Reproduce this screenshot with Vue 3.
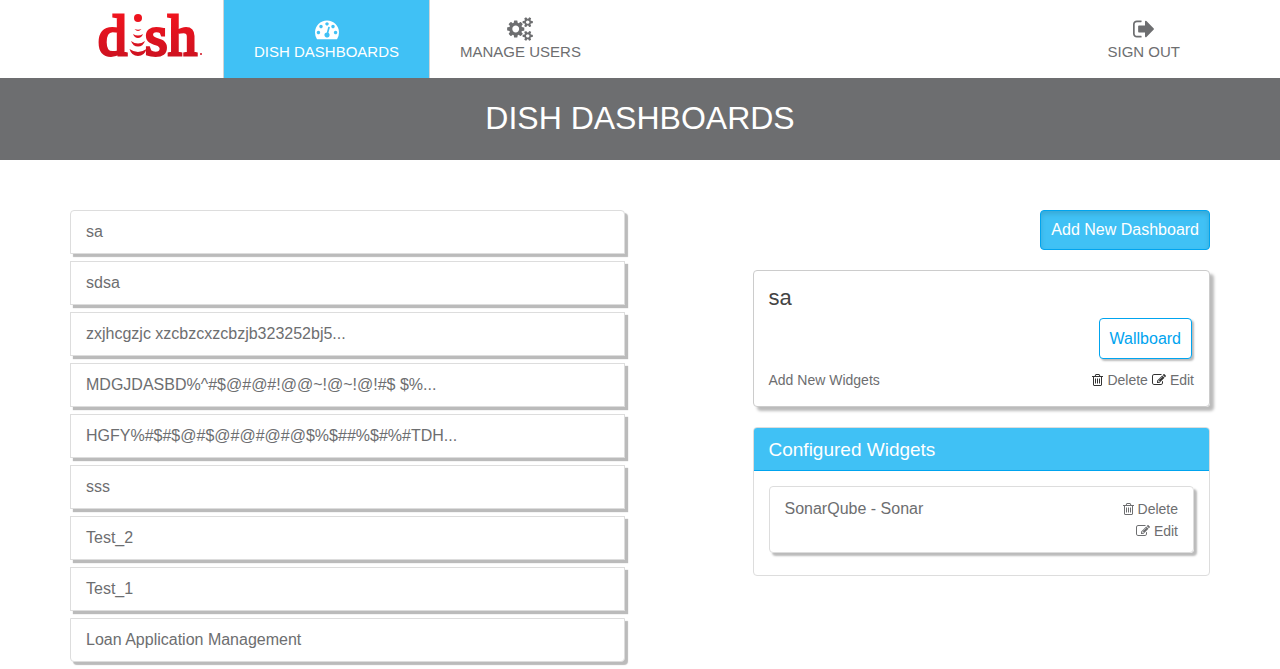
<script setup>
import { ref } from 'vue'

const dashboards = [
  'sa',
  'sdsa',
  'zxjhcgzjc xzcbzcxzcbzjb323252bj5...',
  'MDGJDASBD%^#$@#@#!@@~!@~!@!#$ $%...',
  'HGFY%#$#$@#$@#@#@#@$%$##%$#%#TDH...',
  'sss',
  'Test_2',
  'Test_1',
  'Loan Application Management',
]
const selected = ref('sa')
const widgets = ['SonarQube - Sonar']
</script>

<template>
  <svg class="defs" aria-hidden="true">
    <symbol id="trash" viewBox="0 0 1408 1792">
      <path d="M512 736v576q0 14-9 23t-23 9h-64q-14 0-23-9t-9-23v-576q0-14 9-23t23-9h64q14 0 23 9t9 23zm256 0v576q0 14-9 23t-23 9h-64q-14 0-23-9t-9-23v-576q0-14 9-23t23-9h64q14 0 23 9t9 23zm256 0v576q0 14-9 23t-23 9h-64q-14 0-23-9t-9-23v-576q0-14 9-23t23-9h64q14 0 23 9t9 23zm128 724v-948h-896v948q0 22 7 40.5t14.5 27 10.5 8.5h832q3 0 10.5-8.5t14.5-27 7-40.5zm-672-1076h448l-48-117q-7-9-17-11h-317q-10 2-17 11zm928 32v64q0 14-9 23t-23 9h-96v948q0 83-47 143.5t-113 60.5h-832q-66 0-113-58.5t-47-141.5v-952h-96q-14 0-23-9t-9-23v-64q0-14 9-23t23-9h309l70-167q15-37 54-63t79-26h320q40 0 79 26t54 63l70 167h309q14 0 23 9t9 23z" />
    </symbol>
    <symbol id="edit" viewBox="0 0 1792 1792">
      <path d="M888 1184l116-116-152-152-116 116v56h96v96h56zm440-720q-16-16-33 1l-350 350q-17 17-1 33t33-1l350-350q17-17 1-33zm80 594v190q0 119-84.5 203.5t-203.5 84.5h-832q-119 0-203.5-84.5t-84.5-203.5v-832q0-119 84.5-203.5t203.5-84.5h832q63 0 117 25 15 7 18 23 3 17-9 29l-49 49q-14 14-32 8-23-6-45-6h-832q-66 0-113 47t-47 113v832q0 66 47 113t113 47h832q66 0 113-47t47-113v-126q0-13 9-22l64-64q15-15 35-7t20 29zm-96-738l288 288-672 672h-288v-288zm444 132l-92 92-288-288 92-92q28-28 68-28t68 28l152 152q28 28 28 68t-28 68z" />
    </symbol>
  </svg>

  <header class="topbar">
    <nav class="container nav">
      <a class="brand" href="#" aria-label="dish">
        <svg class="logo" width="108" height="78" viewBox="0 0 108 78">
          <defs>
            <linearGradient id="red" gradientUnits="userSpaceOnUse" x1="0" y1="14" x2="0" y2="56">
              <stop offset="0" stop-color="#f0141e" />
              <stop offset="1" stop-color="#cf1220" />
            </linearGradient>
          </defs>
          <g class="letters">
            <text x="1" y="55">d</text>
            <text x="48" y="55">s</text>
            <text x="71" y="55">h</text>
          </g>
          <g fill="url(#red)">
            <circle cx="41" cy="18" r="4" />
            <path d="M37.500 29q3.500 1.500 7 0q-3.500 4-7 0z" />
            <path d="M36 34q5 3 10 0q-1.500 4-5 4t-5-4z" />
            <path d="M34 41q7 5 14 0q-2 5.500-7 5.500t-7-5.500z" />
            <path d="M32.500 49q8.500 6 17 0q-2 7-8.500 7t-8.500-7z" />
            <circle cx="104" cy="54" r="1" />
          </g>
        </svg>
      </a>
      <a class="tab active" href="#">
        <svg width="24" height="24" viewBox="0 0 1792 1792"><path d="M384 1152q0-53-37.500-90.500t-90.500-37.500-90.500 37.500-37.500 90.500 37.500 90.500 90.500 37.500 90.500-37.500 37.500-90.500zm192-448q0-53-37.500-90.500t-90.500-37.500-90.500 37.500-37.500 90.500 37.500 90.500 90.500 37.500 90.500-37.500 37.500-90.500zm428 481l101-382q6-26-7.500-48.500t-38.500-29.500-48 6.500-30 39.500l-101 382q-60 5-107 43.500t-63 98.500q-20 77 20 146t117 89 146-20 89-117q16-60-6-117t-72-91zm660-33q0-53-37.500-90.500t-90.500-37.500-90.500 37.500-37.500 90.500 37.500 90.500 90.500 37.500 90.500-37.500 37.500-90.500zm-640-640q0-53-37.500-90.500t-90.500-37.500-90.500 37.500-37.500 90.500 37.500 90.500 90.500 37.500 90.500-37.500 37.500-90.500zm448 192q0-53-37.500-90.500t-90.500-37.500-90.500 37.500-37.500 90.500 37.500 90.500 90.500 37.500 90.500-37.500 37.500-90.500zm320 448q0 261-141 483-19 29-54 29h-1402q-35 0-54-29-141-221-141-483 0-182 71-348t191-286 286-191 348-71 348 71 286 191 191 286 71 348z" /></svg>
        <span>DISH DASHBOARDS</span>
      </a>
      <a class="tab" href="#">
        <svg width="26" height="24" viewBox="0 0 1920 1792"><path d="M896 896q0-106-75-181t-181-75-181 75-75 181 75 181 181 75 181-75 75-181zm768 512q0-52-38-90t-90-38-90 38-38 90q0 53 37.500 90.500t90.500 37.500 90.500-37.500 37.500-90.500zm0-1024q0-52-38-90t-90-38-90 38-38 90q0 53 37.500 90.500t90.500 37.500 90.500-37.500 37.500-90.500zm-384 421v185q0 10-7 19.500t-16 10.500l-155 24q-11 35-32 76 34 48 90 115 7 11 7 20 0 12-7 19-23 30-82.500 89.500t-78.500 59.500q-11 0-21-7l-115-90q-37 19-77 31-11 108-23 155-7 24-30 24h-186q-11 0-20-7.500t-10-17.500l-23-153q-34-10-75-31l-118 89q-7 7-20 7-11 0-21-8-144-133-144-160 0-9 7-19 10-14 41-53t47-61q-23-44-35-82l-152-24q-10-1-17-9.500t-7-19.500v-185q0-10 7-19.500t16-10.500l155-24q11-35 32-76-34-48-90-115-7-11-7-20 0-12 7-20 22-30 82-89t79-59q11 0 21 7l115 90q34-18 77-32 11-108 23-154 7-24 30-24h186q11 0 20 7.500t10 17.500l23 153q34 10 75 31l118-89q8-7 20-7 11 0 21 8 144 133 144 160 0 8-7 19-12 16-42 54t-45 60q23 48 34 82l152 23q10 2 17 10.500t7 19.500zm640 533v140q0 16-149 31-12 27-30 52 51 113 51 138 0 4-4 7-122 71-124 71-8 0-46-47t-52-68q-20 2-30 2t-30-2q-14 21-52 68t-46 47q-2 0-124-71-4-3-4-7 0-25 51-138-18-25-30-52-149-15-149-31v-140q0-16 149-31 13-29 30-52-51-113-51-138 0-4 4-7 4-2 35-20t59-34 30-16q8 0 46 46.500t52 67.500q20-2 30-2t30 2q51-71 92-112l6-2q4 0 124 70 4 3 4 7 0 25-51 138 17 23 30 52 149 15 149 31zm0-1024v140q0 16-149 31-12 27-30 52 51 113 51 138 0 4-4 7-122 71-124 71-8 0-46-47t-52-68q-20 2-30 2t-30-2q-14 21-52 68t-46 47q-2 0-124-71-4-3-4-7 0-25 51-138-18-25-30-52-149-15-149-31v-140q0-16 149-31 13-29 30-52-51-113-51-138 0-4 4-7 4-2 35-20t59-34 30-16q8 0 46 46.500t52 67.500q20-2 30-2t30 2q51-71 92-112l6-2q4 0 124 70 4 3 4 7 0 25-51 138 17 23 30 52 149 15 149 31z" /></svg>
        <span>MANAGE USERS</span>
      </a>
      <a class="tab signout" href="#">
        <svg width="21" height="24" viewBox="0 0 1568 1792"><path d="M640 1440q0 4 1 20t.5 26.500-3 23.500-10 19.500-20.500 6.500h-320q-119 0-203.500-84.500t-84.500-203.500v-704q0-119 84.500-203.500t203.500-84.500h320q13 0 22.500 9.500t9.500 22.500q0 4 1 20t.5 26.500-3 23.500-10 19.500-20.500 6.500h-320q-66 0-113 47t-47 113v704q0 66 47 113t113 47h312l11.500 1 11.500 3 8 5.500 7 9 2 13.500zm928-544q0 26-19 45l-544 544q-19 19-45 19t-45-19-19-45v-288h-448q-26 0-45-19t-19-45v-384q0-26 19-45t45-19h448v-288q0-26 19-45t45-19 45 19l544 544q19 19 19 45z" /></svg>
        <span>SIGN OUT</span>
      </a>
    </nav>
  </header>

  <div class="banner"><h1>DISH DASHBOARDS</h1></div>

  <main class="container content">
    <ul class="list">
      <li v-for="name in dashboards" :key="name">
        <a href="#" @click.prevent="selected = name">{{ name }}</a>
      </li>
    </ul>

    <section class="side">
      <button class="add" type="button">Add New Dashboard</button>

      <article class="card">
        <h2>{{ selected }}</h2>
        <button class="wallboard" type="button">Wallboard</button>
        <div class="card-foot">
          <a href="#">Add New Widgets</a>
          <div class="actions">
            <a href="#"><svg class="dark" width="11" height="14"><use href="#trash" /></svg>Delete</a>
            <a href="#"><svg class="dark" width="14" height="14"><use href="#edit" /></svg>Edit</a>
          </div>
        </div>
      </article>

      <section class="panel">
        <h3>Configured Widgets</h3>
        <div class="panel-body">
          <article v-for="w in widgets" :key="w" class="widget">
            <span class="widget-name">{{ w }}</span>
            <div class="widget-actions">
              <a href="#"><svg width="11" height="14"><use href="#trash" /></svg>Delete</a>
              <a href="#"><svg width="14" height="14"><use href="#edit" /></svg>Edit</a>
            </div>
          </article>
        </div>
      </section>
    </section>
  </main>
</template>

<style>
body {
  margin: 0;
  background: #fff;
}
</style>

<style scoped>
* {
  box-sizing: border-box;
}
.defs {
  position: absolute;
  width: 0;
  height: 0;
}
svg {
  fill: currentColor;
  flex: none;
}
a {
  color: #6d6e70;
  text-decoration: none;
}
button {
  font: inherit;
  cursor: pointer;
}
.topbar,
.banner,
.content {
  font-family: "Liberation Sans", Arial, sans-serif;
  color: #6d6e70;
}
.container {
  max-width: 1170px;
  margin: 0 auto;
  padding: 0 15px;
}
.nav {
  display: flex;
}
.brand {
  padding: 0 18px 0 27px;
}
.logo {
  display: block;
  overflow: visible;
}
.letters {
  font-family: "Liberation Serif", serif;
  font-size: 58px;
  fill: url(#red);
  stroke: url(#red);
  stroke-width: 3px;
}
.tab {
  display: flex;
  flex-direction: column;
  align-items: center;
  height: 78px;
  padding: 17px 30px 0;
  font-size: 15px;
  line-height: 22px;
  white-space: nowrap;
}
.tab.active {
  background: #40c1f5;
  color: #fff;
  border: solid #d0d4d6;
  border-width: 0 1px;
}
.signout {
  margin-left: auto;
}
.banner {
  background: #6d6e70;
  color: #fff;
  padding: 20px 15px 22px;
  text-align: center;
}
.banner h1 {
  margin: 0;
  font-size: 32px;
  font-weight: 400;
  line-height: 40px;
}
.content {
  display: flex;
  justify-content: space-between;
  align-items: flex-start;
  padding-top: 50px;
  padding-bottom: 7px;
}
.list {
  list-style: none;
  margin: 0;
  padding: 0;
  width: calc(50% - 15px);
  display: flex;
  flex-direction: column;
  gap: 7px;
}
.list a {
  display: block;
  padding: 11px 15px;
  font-size: 16px;
  line-height: 20px;
  border: 1px solid #ddd;
  background: #fff;
  box-shadow: 3px 3px 1px #bbb;
}
.list li:first-child a {
  border-radius: 4px 4px 0 0;
}
.list li:last-child a {
  border-radius: 0 0 4px 4px;
}
.side {
  width: calc((100% + 30px) * 5 / 12 - 30px);
  display: flex;
  flex-direction: column;
}
.add {
  align-self: flex-end;
  height: 40px;
  padding: 0 10px;
  font-size: 16px;
  color: #fff;
  background: #40c1f5;
  border: 1px solid #00a4ef;
  border-radius: 4px;
  box-shadow: inset 0 3px 5px rgba(0, 0, 0, 0.125);
}
.card {
  display: flex;
  flex-direction: column;
  margin-top: 20px;
  padding: 14px 15px 15px;
  border: 1px solid #ccc;
  border-radius: 4px;
  box-shadow: 4px 4px 3px #bbb;
}
.card h2 {
  margin: 0;
  font-size: 22px;
  font-weight: 400;
  line-height: 26px;
  color: #444;
}
.wallboard {
  align-self: flex-end;
  height: 41px;
  margin: 7px 2px 0 0;
  padding: 0 10px;
  font-size: 16px;
  color: #00a4ef;
  background: #fff;
  border: 1px solid #00a4ef;
  border-radius: 4px;
  box-shadow: 2px 2px 2px #bbb;
}
.card-foot {
  display: flex;
  justify-content: space-between;
  margin-top: 10px;
  font-size: 14px;
  line-height: 22px;
}
.actions {
  display: flex;
  gap: 4px;
}
.actions a,
.widget-actions a {
  display: flex;
  align-items: center;
  gap: 4px;
}
.dark {
  color: #333;
}
.panel {
  margin-top: 20px;
  border: 1px solid #ddd;
  border-radius: 4px;
  overflow: hidden;
}
.panel h3 {
  margin: 0;
  padding: 11px 15px 9px;
  font-size: 19px;
  font-weight: 400;
  line-height: 22px;
  color: #fff;
  background: #40c1f5;
  border-bottom: 1px solid #00a4ef;
}
.panel-body {
  padding: 15px 15px 22px;
}
.widget {
  display: flex;
  justify-content: space-between;
  padding: 11px 15px 10px;
  border: 1px solid #ddd;
  border-radius: 4px;
  box-shadow: 3px 3px 2px #bbb;
}
.widget-name {
  font-size: 16px;
  line-height: 22px;
}
.widget-actions {
  display: flex;
  flex-direction: column;
  align-items: flex-end;
  font-size: 14px;
  line-height: 22px;
}
</style>
